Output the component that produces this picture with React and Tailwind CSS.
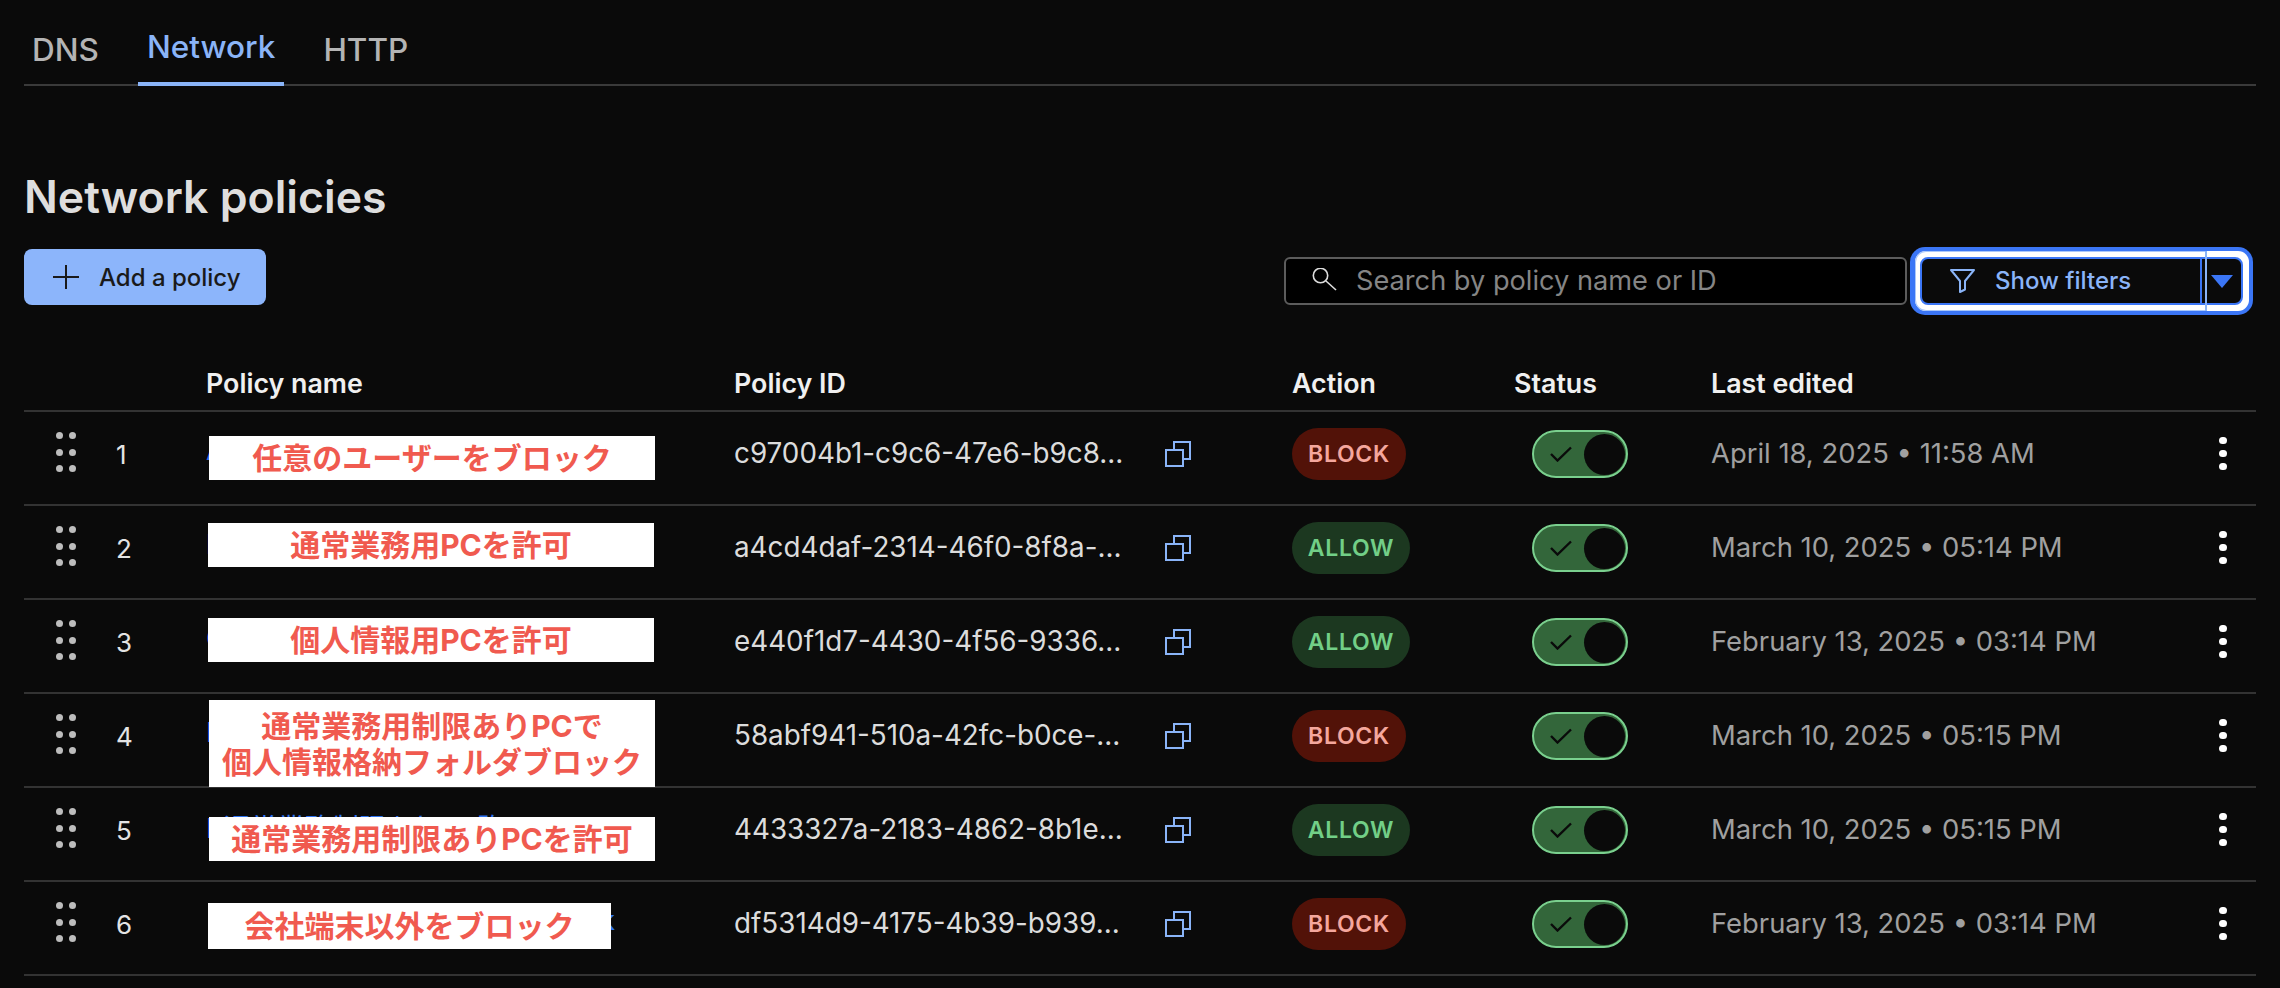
const rows = [
  { n: 1, id: "c97004b1-c9c6-47e6-b9c8…", action: "BLOCK", date: "April 18, 2025", time: "11:58 AM", link: "Any user block", lift: "-mt-[6px]", box: "w-[446px] top-[24px] left-[185px] h-[44px]", label: ["任意のユーザーをブロック"] },
  { n: 2, id: "a4cd4daf-2314-46f0-8f8a-…", action: "ALLOW", date: "March 10, 2025", time: "05:14 PM", link: "Business PC allow", lift: "-mt-[6px]", box: "w-[446px] top-[17px] left-[184px] h-[44px]", label: ["通常業務用PCを許可"] },
  { n: 3, id: "e440f1d7-4430-4f56-9336…", action: "ALLOW", date: "February 13, 2025", time: "03:14 PM", link: "Customer PC allow", lift: "-mt-[6px]", box: "w-[446px] top-[18px] left-[184px] h-[44px]", label: ["個人情報用PCを許可"] },
  { n: 4, id: "58abf941-510a-42fc-b0ce-…", action: "BLOCK", date: "March 10, 2025", time: "05:15 PM", link: "Block restricted PC", lift: "-mt-[6px]", box: "w-[446px] top-[6px] left-[185px] h-[87px]", label: ["通常業務用制限ありPCで", "個人情報格納フォルダブロック"] },
  { n: 5, id: "4433327a-2183-4862-8b1e…", action: "ALLOW", date: "March 10, 2025", time: "05:15 PM", link: "B通常業務制限ありPC許可", lift: "-mt-[2px]", box: "w-[446px] top-[29px] left-[185px] h-[44px]", label: ["通常業務用制限ありPCを許可"] },
  { n: 6, id: "df5314d9-4175-4b39-b939…", action: "BLOCK", date: "February 13, 2025", time: "03:14 PM", link: "Non-corporate devices block", lift: "-mt-[6px]", box: "w-[403px] top-[21px] left-[184px] h-[46px]", label: ["会社端末以外をブロック"], right: true },
];

function Grip() {
  return (
    <div className="grid grid-cols-2 gap-x-[6px] gap-y-[9.4px] w-[20px] -mt-[4px]">
      {[0, 1, 2, 3, 4, 5].map((i) => (
        <span key={i} className="block w-[7px] h-[7px] rounded-full bg-[#bdbdbd]" />
      ))}
    </div>
  );
}

function CopyIcon() {
  return (
    <svg width="26" height="26" viewBox="0 0 26 26" fill="none" stroke="#8ab4f8" strokeWidth="2">
      <rect x="1" y="9" width="17" height="16" />
      <path d="M9 8V1H25V18H18" />
    </svg>
  );
}

function Toggle() {
  return (
    <div className="w-[96px] h-[48px] rounded-full border-2 border-[#7ad08e] bg-[#33663a] flex items-center justify-between pl-[16px] pr-[1px]">
      <svg width="22" height="16" viewBox="0 0 22 16" fill="none" stroke="#0a0a0a" strokeWidth="2.4">
        <path d="M1 8L7.5 14.5L21 1.5" />
      </svg>
      <span className="block w-[41px] h-[41px] rounded-full bg-[#0a0a0a]" />
    </div>
  );
}

function Pill({ action }) {
  const block = action === "BLOCK";
  return (
    <span
      className={
        block
          ? "inline-flex items-center justify-center h-[52px] w-[114px] pt-[1px] rounded-full bg-[#521208] text-[#f4a79d] text-[23px] font-semibold tracking-[0.03em]"
          : "inline-flex items-center justify-center h-[52px] w-[118px] pt-[1px] rounded-full bg-[#1c3820] text-[#72cf87] text-[23px] font-semibold tracking-[0.03em]"
      }
    >
      {action}
    </span>
  );
}

function Kebab() {
  return (
    <div className="flex flex-col gap-[5.5px] -mt-[1px]">
      <span className="block w-[7.5px] h-[7.5px] rounded-full bg-white" />
      <span className="block w-[7.5px] h-[7.5px] rounded-full bg-white" />
      <span className="block w-[7.5px] h-[7.5px] rounded-full bg-white" />
    </div>
  );
}

function Row({ r }) {
  return (
    <div className="relative flex items-center h-[94px] pt-[18px] pb-[26px] border-b-2 border-[#333333] text-[27px]">
      <div className="w-[92px] pl-[32px] shrink-0"><Grip /></div>
      <div className="w-[90px] shrink-0 text-[26px] text-[#e4e4e4]">{r.n}</div>
      <div className={"w-[528px] shrink-0 text-[#2f74f0] whitespace-nowrap " + r.lift}>
        <span className={r.right ? "block w-[409px] text-right" : "block"}>{r.link}</span>
      </div>
      <div className="w-[558px] shrink-0 flex items-center">
        <div className="w-[388px] whitespace-nowrap text-[27.8px] text-[#dcdcdc]">{r.id}</div>
        <div className="ml-[43px]"><CopyIcon /></div>
      </div>
      <div className="w-[240px] shrink-0"><Pill action={r.action} /></div>
      <div className="w-[179px] shrink-0"><Toggle /></div>
      <div className="w-[508px] shrink-0 text-[27.4px] text-[#a0a0a0] whitespace-nowrap">{r.date} • {r.time}</div>
      <Kebab />
    </div>
  );
}

export default function App() {
  return (
    <div className="min-h-screen bg-[#0a0a0a] px-[24px] font-['Inter','Noto_Sans_CJK_JP',sans-serif]">
      {/* tabs */}
      <div className="flex h-[86px] border-b-2 border-[#3a3a3a] items-end text-[31.5px] font-medium">
        <div className="h-[86px] pl-[8px] pr-[39px] pt-[28px] text-[#b4b4b4]">DNS</div>
        <div className="relative h-[86px] px-[9px] pt-[25px] text-[#8ab4f8]">
          Network
          <span className="absolute left-0 right-0 -bottom-[2px] h-[4px] bg-[#8ab4f8]" />
        </div>
        <div className="h-[86px] pl-[39px] pt-[28px] text-[#b4b4b4]">HTTP</div>
      </div>

      <h1 className="mt-[84px] text-[44.6px] leading-[54px] font-semibold text-[#dedede]">Network policies</h1>

      {/* toolbar */}
      <div className="mt-[23px] h-[68px] flex justify-between items-start pr-[3px]">
        <button className="mt-[2px] h-[56px] w-[242px] rounded-[8px] bg-[#8cb5fb] flex items-center pl-[29px] text-[24px] font-medium text-[#1a1a1a]">
          <svg width="26" height="24" viewBox="0 0 26 24" fill="none" stroke="#1a1a1a" strokeWidth="2">
            <path d="M13 0V24M0 12H26" />
          </svg>
          <span className="ml-[20px] mt-[2px]">Add a policy</span>
        </button>
        <div className="flex items-start gap-[3px]">
          <div className="mt-[10px] w-[623px] h-[48px] rounded-[6px] border-2 border-[#5c5c5c] bg-black flex items-center pl-[26px]">
            <svg width="26" height="26" viewBox="0 0 26 26" fill="none" stroke="#dddddd" strokeWidth="1.6">
              <circle cx="8.5" cy="7.5" r="7.2" />
              <path d="M14 13L24 22" />
            </svg>
            <span className="ml-[18px] text-[27.2px] text-[#858585]">Search by policy name or ID</span>
          </div>
          <div className="relative w-[343px] h-[68px] rounded-[15px] bg-[#3b76f6] p-[4px] pl-[5px] pr-[4px]">
            <div className="w-full h-full rounded-[11px] bg-white pt-[6px] pb-[6px] px-[5px]">
              <div className="w-[323px] h-[48px] rounded-[8px] border-2 border-[#3b76f6] bg-[#0a0a0a] flex">
                <div className="w-[280px] flex items-center pl-[28px] border-r-2 border-[#3b76f6]">
                  <svg width="25" height="24" viewBox="0 0 25 24" fill="none" stroke="#8ab4f8" strokeWidth="2">
                    <path d="M1 1H24L15 12V20.5L10 23V12Z" strokeLinejoin="round" />
                  </svg>
                  <span className="ml-[20px] text-[24px] font-medium text-[#8ab4f8]">Show filters</span>
                </div>
                <div className="flex-1 flex items-center pl-[9px]">
                  <svg width="22" height="13" viewBox="0 0 22 13" fill="#3b76f6">
                    <path d="M0 0H22L11 13Z" />
                  </svg>
                </div>
              </div>
            </div>
            <span className="absolute left-[5px] top-[4px] bottom-[4px] w-[291px] rounded-l-[11px] border-y border-l border-[#a9c7fb]" />
            <span className="absolute left-[295px] top-[4px] bottom-[4px] w-[1.5px] bg-[#8ab4f8]" />
          </div>
        </div>
      </div>

      {/* header */}
      <div className="h-[97px] flex items-end pb-[7px] border-b-2 border-[#333333] text-[26.8px] font-semibold text-[#f0f0f0]">
        <div className="w-[182px] shrink-0" />
        <div className="w-[528px] shrink-0">Policy name</div>
        <div className="w-[558px] shrink-0">Policy ID</div>
        <div className="w-[222px] shrink-0">Action</div>
        <div className="w-[197px] shrink-0">Status</div>
        <div>Last edited</div>
      </div>

      {rows.map((r) => (
        <div key={r.n} className="relative">
          <Row r={r} />
          <div className={"absolute bg-white flex flex-col items-center justify-center text-[30px] leading-[36px] font-bold text-[#f05a4f] whitespace-nowrap " + r.box}>
            {r.label.map((t) => <span key={t}>{t}</span>)}
          </div>
        </div>
      ))}
    </div>
  );
}
